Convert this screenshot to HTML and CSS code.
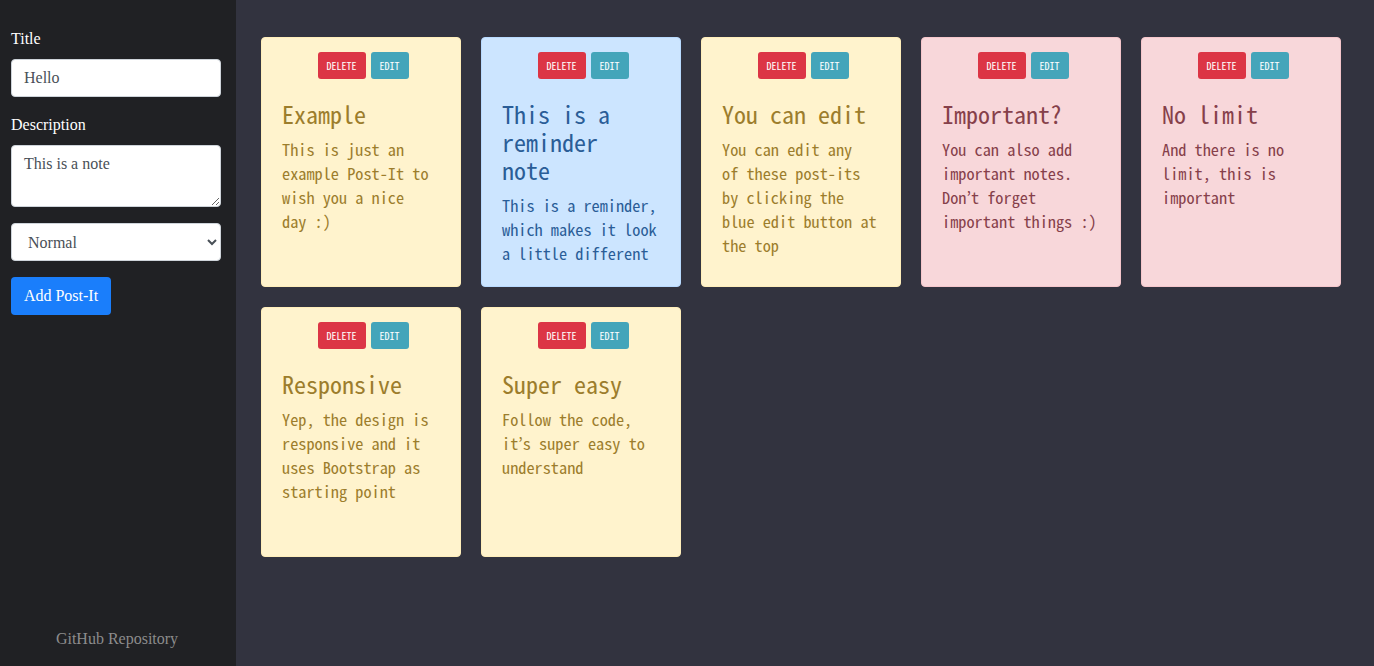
FILE: index.html
```html
<!DOCTYPE html>
<html lang="en">
<head>
<meta charset="utf-8">
<title>Post-It</title>
<link rel="stylesheet" href="styles.css">
</head>
<body>
<div class="app">
  <aside class="sidebar">
    <form class="form">
      <label class="label">Title</label>
      <input class="control" type="text" value="Hello">
      <label class="label label-next">Description</label>
      <textarea class="control textarea">This is a note</textarea>
      <select class="control select">
        <option>Normal</option>
        <option>Reminder</option>
        <option>Important</option>
      </select>
      <button type="button" class="add-btn">Add Post-It</button>
    </form>
    <a class="repo">GitHub Repository</a>
  </aside>
  <main class="board">
    <div class="note note-normal">
      <div class="actions"><span class="btn btn-delete">DELETE</span><span class="btn btn-edit">EDIT</span></div>
      <h4 class="note-title">Example</h4>
      <p class="note-text">This is just an<br>example Post-It to<br>wish you a nice<br>day :)</p>
    </div>
    <div class="note note-reminder">
      <div class="actions"><span class="btn btn-delete">DELETE</span><span class="btn btn-edit">EDIT</span></div>
      <h4 class="note-title">This is a<br>reminder<br>note</h4>
      <p class="note-text">This is a reminder,<br>which makes it look<br>a little different</p>
    </div>
    <div class="note note-normal">
      <div class="actions"><span class="btn btn-delete">DELETE</span><span class="btn btn-edit">EDIT</span></div>
      <h4 class="note-title">You can edit</h4>
      <p class="note-text">You can edit any<br>of these post-its<br>by clicking the<br>blue edit button at<br>the top</p>
    </div>
    <div class="note note-important">
      <div class="actions"><span class="btn btn-delete">DELETE</span><span class="btn btn-edit">EDIT</span></div>
      <h4 class="note-title">Important?</h4>
      <p class="note-text">You can also add<br>important notes.<br>Don’t forget<br>important things :)</p>
    </div>
    <div class="note note-important">
      <div class="actions"><span class="btn btn-delete">DELETE</span><span class="btn btn-edit">EDIT</span></div>
      <h4 class="note-title">No limit</h4>
      <p class="note-text">And there is no<br>limit, this is<br>important</p>
    </div>
    <div class="note note-normal">
      <div class="actions"><span class="btn btn-delete">DELETE</span><span class="btn btn-edit">EDIT</span></div>
      <h4 class="note-title">Responsive</h4>
      <p class="note-text">Yep, the design is<br>responsive and it<br>uses Bootstrap as<br>starting point</p>
    </div>
    <div class="note note-normal">
      <div class="actions"><span class="btn btn-delete">DELETE</span><span class="btn btn-edit">EDIT</span></div>
      <h4 class="note-title">Super easy</h4>
      <p class="note-text">Follow the code,<br>it’s super easy to<br>understand</p>
    </div>
  </main>
</div>
</body>
</html>
```
FILE: styles.css
```css
* { box-sizing: border-box; }
html, body { margin: 0; height: 100%; }
body {
  font-family: "Liberation Serif", "Times New Roman", serif;
  font-size: 16px;
  background: #32333f;
}
.app {
  display: flex;
  height: 666px;
}
.sidebar {
  width: 236px;
  flex: none;
  background: #202124;
  display: flex;
  flex-direction: column;
  justify-content: space-between;
  padding: 27px 15px 18px 11px;
}
.form {
  display: flex;
  flex-direction: column;
  align-items: flex-start;
}
.label {
  color: #ffffff;
  line-height: 24px;
  margin-bottom: 8px;
}
.label-next { margin-top: 16px; }
.control {
  width: 210px;
  height: 38px;
  border: 1px solid #ced4da;
  border-radius: 4px;
  background: #ffffff;
  font-family: "Liberation Serif", "Times New Roman", serif;
  font-size: 16px;
  color: #495057;
  padding: 6px 12px;
}
.textarea {
  height: 62px;
  resize: vertical;
  padding-top: 8px;
  line-height: 20px;
}
.select {
  margin-top: 16px;
  padding-left: 12px;
}
.add-btn {
  margin-top: 16px;
  width: 100px;
  height: 38px;
  border: none;
  border-radius: 4px;
  background: #1a7efb;
  color: #ffffff;
  font-family: "Liberation Serif", "Times New Roman", serif;
  font-size: 16px;
  padding: 0;
}
.repo {
  text-align: center;
  color: #8c8c8c;
  line-height: 18px;
  padding-left: 2px;
}
.board {
  flex: 1;
  display: flex;
  flex-wrap: wrap;
  align-content: flex-start;
  gap: 20px;
  padding: 37px 25px;
}
.note {
  width: 200px;
  height: 250px;
  border: 1px solid;
  border-radius: 4px;
  padding: 14px 16px 14px 20px;
  font-family: "Noto Sans Mono CJK JP", "Liberation Mono", monospace;
}
.note-normal { background: #fff3cd; border-color: #ffeeba; color: #9c7d2c; }
.note-reminder { background: #cce5ff; border-color: #b8daff; color: #2a5d97; }
.note-important { background: #f8d7da; border-color: #f5c6cb; color: #86404a; }
.actions {
  display: flex;
  justify-content: center;
  gap: 5px;
  margin-bottom: 22px;
}
.btn {
  height: 27px;
  border-radius: 3px;
  color: #ffffff;
  font-size: 10px;
  display: flex;
  align-items: center;
  justify-content: center;
}
.btn-delete { width: 48px; background: #dc3545; }
.btn-edit { width: 38px; background: #44a5ba; }
.note-title {
  margin: 0 0 9px;
  font-weight: 300;
  font-size: 24px;
  line-height: 28px;
  position: relative;
  top: -1px;
}
.note-text {
  margin: 0;
  font-weight: 300;
  font-size: 16.3px;
  line-height: 24px;
  position: relative;
  top: -1px;
}
```
